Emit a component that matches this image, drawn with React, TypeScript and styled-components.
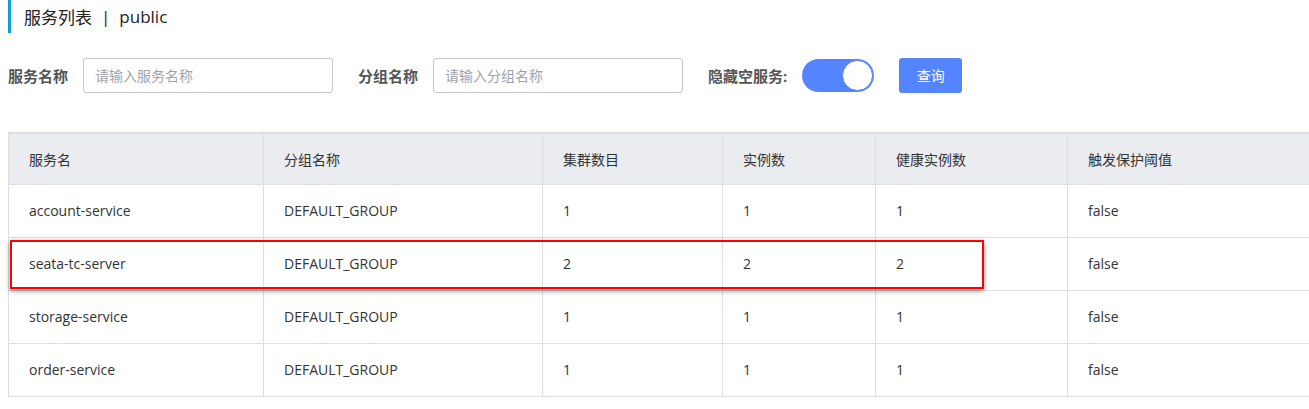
import { useState } from "react";
import { createGlobalStyle, styled } from "styled-components";

const GlobalStyle = createGlobalStyle`
  body {
    margin: 0;
    overflow: hidden;
    background: #fff;
    color: #333;
    font-family: "Open Sans", "Noto Sans CJK SC", sans-serif;
    font-size: 14px;
  }
  * {
    box-sizing: border-box;
  }
`;

const Page = styled.div`
  padding: 0 8px;
`;

const PageTitle = styled.div`
  display: flex;
  align-items: center;
  height: 33px;
  padding-left: 13px;
  border-left: 3px solid #0e9bd6;
  font-size: 17px;
  color: #222;
`;

const TitleSep = styled.span`
  margin: 0 9px;
`;

const FilterBar = styled.div`
  display: flex;
  align-items: center;
  height: 36px;
  margin-top: 24px;
`;

const FilterLabel = styled.label`
  font-weight: bold;
  color: #555;
  font-size: 15px;
  margin-right: 15px;
  white-space: nowrap;
`;

const TextInput = styled.input`
  width: 250px;
  height: 35px;
  padding: 0 11px;
  margin-right: 25px;
  border: 1px solid #c4c6cf;
  border-radius: 3px;
  font: inherit;
  font-size: 14px;
  color: #333;
  outline: none;

  &::placeholder {
    color: #a0a2ad;
  }
`;

const SwitchTrack = styled.button<{ $on: boolean }>`
  position: relative;
  width: 72px;
  height: 33px;
  margin-right: 25px;
  padding: 0;
  border: none;
  border-radius: 17px;
  background: ${(p) => (p.$on ? "#5584ff" : "#e4e6ed")};
  cursor: pointer;
`;

const SwitchKnob = styled.span<{ $on: boolean }>`
  position: absolute;
  top: 1px;
  left: ${(p) => (p.$on ? "40px" : "1px")};
  width: 31px;
  height: 31px;
  border-radius: 50%;
  background: #fff;
  border: 1px solid #5584ff;
`;

const SearchButton = styled.button`
  width: 63px;
  height: 35px;
  border: none;
  border-radius: 3px;
  background: #5584ff;
  color: #fff;
  font: inherit;
  font-size: 14px;
  cursor: pointer;
`;

const TableWrap = styled.div`
  position: relative;
  margin-top: 39px;
  width: 1330px;
`;

const Table = styled.table`
  width: 100%;
  table-layout: fixed;
  border-collapse: collapse;
  border-top: 2px solid #dcdee3;
  border-left: 1px solid #dcdee3;
`;

const HeadCell = styled.th`
  height: 51px;
  padding: 0 20px;
  text-align: left;
  font-weight: normal;
  color: #333;
  background: #ebecf0;
  border-right: 1px solid #dcdee3;
  border-bottom: 1px solid #dcdee3;
`;

const Cell = styled.td`
  height: 53px;
  padding: 0 20px;
  color: #333;
  border-right: 1px solid #dcdee3;
  border-bottom: 1px solid #dcdee3;
`;

// red annotation drawn over the second row
const Highlight = styled.div`
  position: absolute;
  left: 2px;
  top: 108px;
  width: 974px;
  height: 49px;
  border: 2px solid #f00;
  box-shadow: 0 2px 5px rgba(0, 0, 0, 0.45);
  pointer-events: none;
`;

const columns = [
  { title: "服务名", width: 255 },
  { title: "分组名称", width: 279 },
  { title: "集群数目", width: 180 },
  { title: "实例数", width: 153 },
  { title: "健康实例数", width: 192 },
  { title: "触发保护阈值", width: 271 },
];

const services = [
  { name: "account-service", group: "DEFAULT_GROUP", clusters: 1, instances: 1, healthy: 1, protect: "false" },
  { name: "seata-tc-server", group: "DEFAULT_GROUP", clusters: 2, instances: 2, healthy: 2, protect: "false" },
  { name: "storage-service", group: "DEFAULT_GROUP", clusters: 1, instances: 1, healthy: 1, protect: "false" },
  { name: "order-service", group: "DEFAULT_GROUP", clusters: 1, instances: 1, healthy: 1, protect: "false" },
];

const App = () => {
  const [hideEmpty, setHideEmpty] = useState(true);

  return (
    <Page>
      <GlobalStyle />
      <PageTitle>
        服务列表<TitleSep>|</TitleSep>public
      </PageTitle>

      <FilterBar>
        <FilterLabel>服务名称</FilterLabel>
        <TextInput placeholder="请输入服务名称" />
        <FilterLabel>分组名称</FilterLabel>
        <TextInput placeholder="请输入分组名称" />
        <FilterLabel>隐藏空服务:</FilterLabel>
        <SwitchTrack
          $on={hideEmpty}
          aria-label="隐藏空服务"
          onClick={() => setHideEmpty(!hideEmpty)}
        >
          <SwitchKnob $on={hideEmpty} />
        </SwitchTrack>
        <SearchButton>查询</SearchButton>
      </FilterBar>

      <TableWrap>
        <Table>
          <colgroup>
            {columns.map((c) => (
              <col key={c.title} style={{ width: c.width }} />
            ))}
          </colgroup>
          <thead>
            <tr>
              {columns.map((c) => (
                <HeadCell key={c.title}>{c.title}</HeadCell>
              ))}
            </tr>
          </thead>
          <tbody>
            {services.map((s) => (
              <tr key={s.name}>
                <Cell>{s.name}</Cell>
                <Cell>{s.group}</Cell>
                <Cell>{s.clusters}</Cell>
                <Cell>{s.instances}</Cell>
                <Cell>{s.healthy}</Cell>
                <Cell>{s.protect}</Cell>
              </tr>
            ))}
          </tbody>
        </Table>
        <Highlight />
      </TableWrap>
    </Page>
  );
};

export default App;
